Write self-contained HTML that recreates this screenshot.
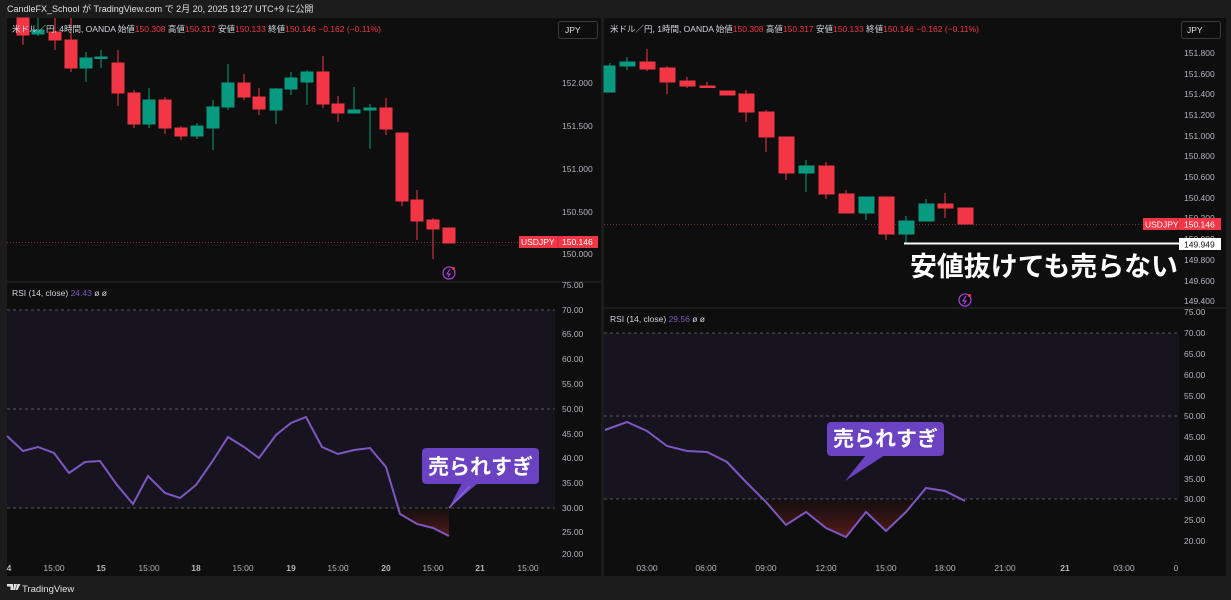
<!DOCTYPE html>
<html><head><meta charset="utf-8"><style>
html,body{margin:0;padding:0;background:#1c1c1c;}
svg{display:block;}
text{font-family:"Liberation Sans","Noto Sans CJK JP",sans-serif;}
</style></head><body>
<svg width="1231" height="600" viewBox="0 0 1231 600" xmlns="http://www.w3.org/2000/svg">
<defs>
<linearGradient id="rf" x1="0" y1="0" x2="0" y2="1">
<stop offset="0" stop-color="#5a1a1a" stop-opacity="0.1"/>
<stop offset="1" stop-color="#7a2020" stop-opacity="0.7"/>
</linearGradient>
</defs>
<rect width="1231" height="600" fill="#1c1c1c"/>
<text x="7" y="12" font-size="9" fill="#e0e0e0">CandleFX_School が TradingView.com で 2月 20, 2025 19:27 UTC+9 に公開</text>

<!-- LEFT PANEL -->
<rect x="7" y="18" width="594" height="558" fill="#0e0e0e"/>
<line x1="7" y1="282" x2="601" y2="282" fill="none" stroke="#2a2a2a"/>
<line x1="7" y1="242.5" x2="518" y2="242.5" stroke="#7a2a30" stroke-dasharray="1,2"/>
<g stroke-width="1">
<g fill="#f23645" stroke="#f23645">
<line x1="23" y1="18" x2="23" y2="45"/><rect x="17" y="18" width="12" height="17"/>
<line x1="55" y1="18" x2="55" y2="50"/><rect x="49" y="32" width="12" height="8"/>
<line x1="71" y1="18" x2="71" y2="72"/><rect x="65" y="40" width="12" height="28"/>
<line x1="118" y1="50" x2="118" y2="106"/><rect x="112" y="63" width="12" height="30"/>
<line x1="134" y1="90" x2="134" y2="128"/><rect x="128" y="93" width="12" height="31"/>
<line x1="165" y1="97" x2="165" y2="134"/><rect x="159" y="100" width="12" height="28"/>
<line x1="181" y1="126" x2="181" y2="140"/><rect x="175" y="128" width="12" height="8"/>
<line x1="244" y1="74" x2="244" y2="100"/><rect x="238" y="83" width="12" height="14"/>
<line x1="259" y1="88" x2="259" y2="115"/><rect x="253" y="97" width="12" height="12"/>
<line x1="323" y1="56" x2="323" y2="108"/><rect x="317" y="72" width="12" height="32"/>
<line x1="338" y1="96" x2="338" y2="122"/><rect x="332" y="104" width="12" height="9"/>
<line x1="386" y1="98" x2="386" y2="135"/><rect x="380" y="108" width="12" height="21"/>
<line x1="402" y1="133" x2="402" y2="206"/><rect x="396" y="133" width="12" height="68"/>
<line x1="417" y1="190" x2="417" y2="240"/><rect x="411" y="200" width="12" height="21"/>
<line x1="433" y1="218" x2="433" y2="259"/><rect x="427" y="220" width="12" height="9"/>
<rect x="443" y="228" width="12" height="15"/>
</g>
<g fill="#089981" stroke="#089981">
<line x1="38" y1="18" x2="38" y2="36"/><rect x="32" y="30" width="12" height="4"/>
<line x1="86" y1="52" x2="86" y2="82"/><rect x="80" y="58" width="12" height="10"/>
<line x1="101" y1="50" x2="101" y2="68"/><rect x="95" y="57" width="12" height="1.5"/>
<line x1="149" y1="88" x2="149" y2="128"/><rect x="143" y="100" width="12" height="24"/>
<line x1="197" y1="123" x2="197" y2="139"/><rect x="191" y="126" width="12" height="10"/>
<line x1="213" y1="100" x2="213" y2="150"/><rect x="207" y="107" width="12" height="21"/>
<line x1="228" y1="64" x2="228" y2="110"/><rect x="222" y="83" width="12" height="24"/>
<line x1="276" y1="88" x2="276" y2="124"/><rect x="270" y="89" width="12" height="21"/>
<line x1="291" y1="72" x2="291" y2="95"/><rect x="285" y="78" width="12" height="11"/>
<line x1="307" y1="70" x2="307" y2="105"/><rect x="301" y="72" width="12" height="10"/>
<line x1="354" y1="87" x2="354" y2="113"/><rect x="348" y="110" width="12" height="3"/>
<line x1="370" y1="104" x2="370" y2="149"/><rect x="364" y="108" width="12" height="2"/>
</g>
</g>
<text x="12" y="32" font-size="8.5" fill="#d1d4dc">米ドル／円, 4時間, OANDA  始値<tspan fill="#f23645">150.308</tspan>  高値<tspan fill="#f23645">150.317</tspan>  安値<tspan fill="#f23645">150.133</tspan>  終値<tspan fill="#f23645">150.146</tspan>  <tspan fill="#f23645">−0.162 (−0.11%)</tspan></text>
<rect x="558.5" y="21.5" width="39" height="17" rx="2" fill="#0e0e0e" stroke="#3a3a3a"/>
<text x="565" y="33" font-size="8.5" fill="#e0e0e0">JPY</text>
<g font-size="8.5" fill="#b2b5be">
<text x="562" y="86">152.000</text>
<text x="562" y="129">151.500</text>
<text x="562" y="172">151.000</text>
<text x="562" y="215">150.500</text>
<text x="562" y="257">150.000</text>
</g>
<rect x="519" y="236" width="79" height="12" fill="#f23645"/>
<line x1="558" y1="236" x2="558" y2="248" stroke="#c02a38"/>
<text x="521" y="245" font-size="8.5" fill="#fff">USDJPY</text>
<text x="562" y="245" font-size="8.5" fill="#fff">150.146</text>
<circle cx="449" cy="273" r="6" fill="none" stroke="#9c3fd0" stroke-width="1.3"/>
<path d="M450 269 L447 274 L450 274 L448 277" fill="none" stroke="#9c3fd0" stroke-width="1.2"/>
<circle cx="453.5" cy="268.5" r="1.5" fill="#f23645"/>

<!-- RSI left -->
<rect x="7" y="310" width="548" height="198" fill="#17141f"/>
<g stroke="#55535c" stroke-dasharray="3,3"><line x1="7" y1="310" x2="555" y2="310"/><line x1="7" y1="409" x2="555" y2="409"/><line x1="7" y1="508" x2="555" y2="508"/></g>
<polygon points="398,508 400,514 417,524 433,528 449,536 449,508" fill="url(#rf)"/>
<polyline points="7,436 23,451 38,447 54,453 69,473 85,462 100,461 117,485 133,504 148,476 165,493 180,498 196,485 212,462 228,437 244,447 259,458 276,435 291,423 306,417 322,447 338,454 354,450 370,448 386,467 400,514 417,524 433,528 449,536" fill="none" stroke="#7e57c2" stroke-width="2"/>
<text x="12" y="296" font-size="8.5" fill="#d1d4dc">RSI (14, close)  <tspan fill="#7e57c2">24.43</tspan>  ø  ø</text>
<g font-size="8.5" fill="#b2b5be">
<text x="562" y="288">75.00</text><text x="562" y="313">70.00</text><text x="562" y="337">65.00</text><text x="562" y="362">60.00</text><text x="562" y="387">55.00</text><text x="562" y="412">50.00</text><text x="562" y="437">45.00</text><text x="562" y="461">40.00</text><text x="562" y="486">35.00</text><text x="562" y="511">30.00</text><text x="562" y="535">25.00</text><text x="562" y="557">20.00</text>
</g>
<g font-size="8.5" fill="#b2b5be" text-anchor="middle">
<text x="9" y="571" font-weight="bold">4</text><text x="54" y="571">15:00</text><text x="101" y="571" font-weight="bold">15</text><text x="149" y="571">15:00</text><text x="196" y="571" font-weight="bold">18</text><text x="243" y="571">15:00</text><text x="291" y="571" font-weight="bold">19</text><text x="338" y="571">15:00</text><text x="386" y="571" font-weight="bold">20</text><text x="433" y="571">15:00</text><text x="480" y="571" font-weight="bold">21</text><text x="528" y="571">15:00</text>
</g>
<path d="M462 483 L449 508 L478 483 Z" fill="#6a42c2"/>
<line x1="449" y1="508" x2="470" y2="486" stroke="#8a66d8" stroke-width="1.5"/>
<rect x="422" y="448" width="117" height="36" rx="4" fill="#6a42c2"/>
<text x="480.5" y="474" font-size="21" font-weight="bold" fill="#fff" text-anchor="middle">売られすぎ</text>

<!-- RIGHT PANEL -->
<rect x="604" y="18" width="622" height="558" fill="#0e0e0e"/>
<line x1="604" y1="308" x2="1226" y2="308" stroke="#2a2a2a"/>
<line x1="604" y1="224.5" x2="1142" y2="224.5" stroke="#7a2a30" stroke-dasharray="1,2"/>
<g>
<g fill="#f23645" stroke="#f23645">
<line x1="647" y1="49" x2="647" y2="71"/><rect x="640" y="62" width="15" height="7"/>
<line x1="667" y1="66" x2="667" y2="94"/><rect x="660" y="68" width="15" height="14"/>
<line x1="687" y1="77" x2="687" y2="88"/><rect x="680" y="81" width="15" height="5"/>
<line x1="707" y1="82" x2="707" y2="88"/><rect x="700" y="86" width="15" height="1.5"/>
<rect x="720" y="91" width="15" height="4"/>
<line x1="746" y1="90" x2="746" y2="122"/><rect x="739" y="94" width="15" height="18"/>
<line x1="766" y1="110" x2="766" y2="152"/><rect x="759" y="112" width="15" height="25"/>
<line x1="786" y1="137" x2="786" y2="180"/><rect x="779" y="137" width="15" height="36"/>
<line x1="826" y1="162" x2="826" y2="199"/><rect x="819" y="166" width="15" height="28"/>
<line x1="846" y1="190" x2="846" y2="213"/><rect x="839" y="194" width="15" height="19"/>
<line x1="886" y1="197" x2="886" y2="240"/><rect x="879" y="197" width="15" height="37"/>
<line x1="945" y1="193" x2="945" y2="218"/><rect x="938" y="204" width="15" height="4"/>
<rect x="958" y="208" width="15" height="16"/>
</g>
<g fill="#089981" stroke="#089981">
<line x1="610" y1="63" x2="610" y2="92"/><rect x="604" y="66" width="11" height="26"/>
<line x1="627" y1="57" x2="627" y2="70"/><rect x="620" y="62" width="15" height="4"/>
<line x1="806" y1="160" x2="806" y2="192"/><rect x="799" y="166" width="15" height="7"/>
<line x1="866" y1="197" x2="866" y2="220"/><rect x="859" y="197" width="15" height="16"/>
<line x1="906" y1="216" x2="906" y2="243"/><rect x="899" y="221" width="15" height="13"/>
<line x1="926" y1="199" x2="926" y2="221"/><rect x="919" y="204" width="15" height="17"/>
</g>
</g>
<text x="610" y="32" font-size="8.5" fill="#d1d4dc">米ドル／円, 1時間, OANDA  始値<tspan fill="#f23645">150.308</tspan>  高値<tspan fill="#f23645">150.317</tspan>  安値<tspan fill="#f23645">150.133</tspan>  終値<tspan fill="#f23645">150.146</tspan>  <tspan fill="#f23645">−0.162 (−0.11%)</tspan></text>
<rect x="1181.5" y="21.5" width="39" height="17" rx="2" fill="#0e0e0e" stroke="#3a3a3a"/>
<text x="1187" y="33" font-size="8.5" fill="#e0e0e0">JPY</text>
<g font-size="8.5" fill="#b2b5be">
<text x="1184" y="56">151.800</text><text x="1184" y="77">151.600</text><text x="1184" y="97">151.400</text><text x="1184" y="118">151.200</text><text x="1184" y="139">151.000</text><text x="1184" y="159">150.800</text><text x="1184" y="180">150.600</text><text x="1184" y="201">150.400</text><text x="1184" y="221">150.200</text><text x="1184" y="242">150.000</text><text x="1184" y="263">149.800</text><text x="1184" y="284">149.600</text><text x="1184" y="304">149.400</text>
</g>
<rect x="1143" y="218" width="78" height="12" fill="#f23645"/>
<line x1="1178" y1="218" x2="1178" y2="230" stroke="#c02a38"/>
<text x="1145" y="227.5" font-size="8.5" fill="#fff">USDJPY</text>
<text x="1184" y="227.5" font-size="8.5" fill="#fff">150.146</text>
<line x1="904" y1="243.5" x2="1179" y2="243.5" stroke="#fff" stroke-width="2"/>
<rect x="1179" y="238" width="42" height="12" fill="#fff"/>
<text x="1184" y="247.5" font-size="8.5" fill="#111">149.949</text>
<text x="910" y="276" font-size="27" font-weight="bold" fill="#fff" textLength="268" lengthAdjust="spacingAndGlyphs">安値抜けても売らない</text>
<circle cx="965" cy="300" r="6" fill="none" stroke="#9c3fd0" stroke-width="1.3"/>
<path d="M966 296 L963 301 L966 301 L964 304" fill="none" stroke="#9c3fd0" stroke-width="1.2"/>
<circle cx="969.5" cy="295.5" r="1.5" fill="#f23645"/>

<!-- RSI right -->
<rect x="604" y="333" width="575" height="166" fill="#17141f"/>
<g stroke="#55535c" stroke-dasharray="3,3"><line x1="604" y1="333" x2="1179" y2="333"/><line x1="604" y1="416" x2="1179" y2="416"/><line x1="604" y1="499" x2="1179" y2="499"/></g>
<polygon points="762,499 766,502 786,525 806,512 826,528 846,537 866,512 886,531 906,512 915,499" fill="url(#rf)"/>
<polyline points="605,430 627,422 647,431 667,446 687,451 707,452 727,462 746,482 766,502 786,525 806,512 826,528 846,537 866,512 886,531 906,512 926,488 945,491 965,501" fill="none" stroke="#7e57c2" stroke-width="2"/>
<text x="610" y="322" font-size="8.5" fill="#d1d4dc">RSI (14, close)  <tspan fill="#7e57c2">29.56</tspan>  ø  ø</text>
<g font-size="8.5" fill="#b2b5be">
<text x="1184" y="315">75.00</text><text x="1184" y="336">70.00</text><text x="1184" y="357">65.00</text><text x="1184" y="378">60.00</text><text x="1184" y="399">55.00</text><text x="1184" y="419">50.00</text><text x="1184" y="440">45.00</text><text x="1184" y="461">40.00</text><text x="1184" y="482">35.00</text><text x="1184" y="502">30.00</text><text x="1184" y="523">25.00</text><text x="1184" y="544">20.00</text>
</g>
<g font-size="8.5" fill="#b2b5be" text-anchor="middle">
<text x="647" y="571">03:00</text><text x="706" y="571">06:00</text><text x="766" y="571">09:00</text><text x="826" y="571">12:00</text><text x="886" y="571">15:00</text><text x="945" y="571">18:00</text><text x="1005" y="571">21:00</text><text x="1065" y="571" font-weight="bold">21</text><text x="1124" y="571">03:00</text><text x="1176" y="571">0</text>
</g>
<path d="M866 455 L845 481 L885 455 Z" fill="#6a42c2"/>
<rect x="827" y="422" width="117" height="34" rx="4" fill="#6a42c2"/>
<text x="885.5" y="446" font-size="21" font-weight="bold" fill="#fff" text-anchor="middle">売られすぎ</text>

<!-- footer -->
<path d="M7 584 h6 v6 h-2.5 v-3.5 h-3.5 z M14 584 h3 l-2 6 h-2 z M17.5 584 h3 l-3 6 h-2 z" fill="#e0e0e0"/>
<text x="22" y="592" font-size="9.5" fill="#e0e0e0">TradingView</text>
</svg>
</body></html>
